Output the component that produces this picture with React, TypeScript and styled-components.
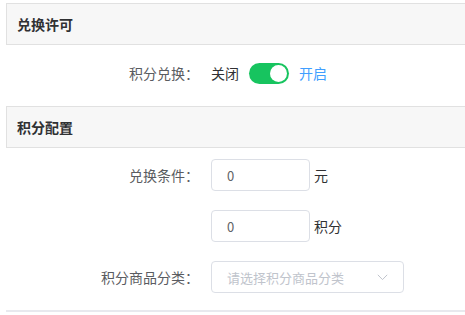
import React from "react";
import styled, { createGlobalStyle } from "styled-components";

const GlobalStyle = createGlobalStyle`
  html, body {
    margin: 0;
    padding: 0;
    background: #fff;
    overflow: hidden;
  }
  body {
    font-family: "Noto Sans CJK SC", "Noto Sans", sans-serif;
    font-size: 14px;
    color: #606266;
  }
`;

const Page = styled.div`
  padding: 3px 0 0 6px;
`;

const SectionHeader = styled.div`
  height: 40px;
  display: flex;
  align-items: center;
  padding-left: 10px;
  background: #f7f7f7;
  border: 1px solid #e1e1e1;
  border-right: none;
  font-size: 14px;
  font-weight: 700;
  color: #303133;
`;

const FormBody = styled.div<{ $top: number }>`
  display: flex;
  flex-direction: column;
  gap: 19px;
  padding: ${(p) => p.$top}px 0 17px;
`;

const Row = styled.div`
  display: flex;
  align-items: center;
  height: 32px;
`;

const Label = styled.label`
  width: 205px;
  box-sizing: border-box;
  padding-right: 12px;
  text-align: right;
  font-size: 14px;
  color: #5a5c61;
  flex-shrink: 0;
`;

const SwitchText = styled.span<{ $active?: boolean }>`
  font-size: 14px;
  color: ${(p) => (p.$active ? "#409eff" : "#303133")};
`;

const Switch = styled.span<{ $on: boolean }>`
  position: relative;
  display: inline-block;
  width: 40px;
  height: 21px;
  margin: 0 10px;
  border-radius: 11px;
  background: ${(p) => (p.$on ? "#17c45f" : "#dcdfe6")};

  &::after {
    content: "";
    position: absolute;
    top: 2px;
    left: ${(p) => (p.$on ? "21px" : "2px")};
    width: 17px;
    height: 17px;
    border-radius: 50%;
    background: #fff;
  }
`;

const Input = styled.div<{ $width: number }>`
  width: ${(p) => p.$width}px;
  height: 32px;
  box-sizing: border-box;
  display: flex;
  align-items: center;
  justify-content: space-between;
  padding: 0 15px;
  border: 1px solid #dcdfe6;
  border-radius: 4px;
  font-size: 13px;
  color: #606266;
`;

const Placeholder = styled.span`
  color: #c0c4cc;
  font-size: 13px;
`;

const Unit = styled.span`
  margin-left: 4px;
  font-size: 14px;
  color: #303133;
`;

const BottomRule = styled.div`
  height: 2px;
  background: #e8e9ee;
`;

const Arrow = () => (
  <svg width="11" height="7" viewBox="0 0 11 7" fill="none">
    <path d="M0.8 0.8 L5.5 5.6 L10.2 0.8" stroke="#c0c4cc" strokeWidth="1" />
  </svg>
);

export default function App() {
  return (
    <>
      <GlobalStyle />
      <Page>
        <SectionHeader>兑换许可</SectionHeader>
        <FormBody $top={12}>
          <Row>
            <Label>积分兑换：</Label>
            <SwitchText>关闭</SwitchText>
            <Switch $on />
            <SwitchText $active>开启</SwitchText>
          </Row>
        </FormBody>
        <SectionHeader>积分配置</SectionHeader>
        <FormBody $top={11}>
          <Row>
            <Label>兑换条件：</Label>
            <Input $width={99}>0</Input>
            <Unit>元</Unit>
          </Row>
          <Row>
            <Label />
            <Input $width={99}>0</Input>
            <Unit>积分</Unit>
          </Row>
          <Row>
            <Label>积分商品分类：</Label>
            <Input $width={193}>
              <Placeholder>请选择积分商品分类</Placeholder>
              <Arrow />
            </Input>
          </Row>
        </FormBody>
        <BottomRule />
      </Page>
    </>
  );
}
